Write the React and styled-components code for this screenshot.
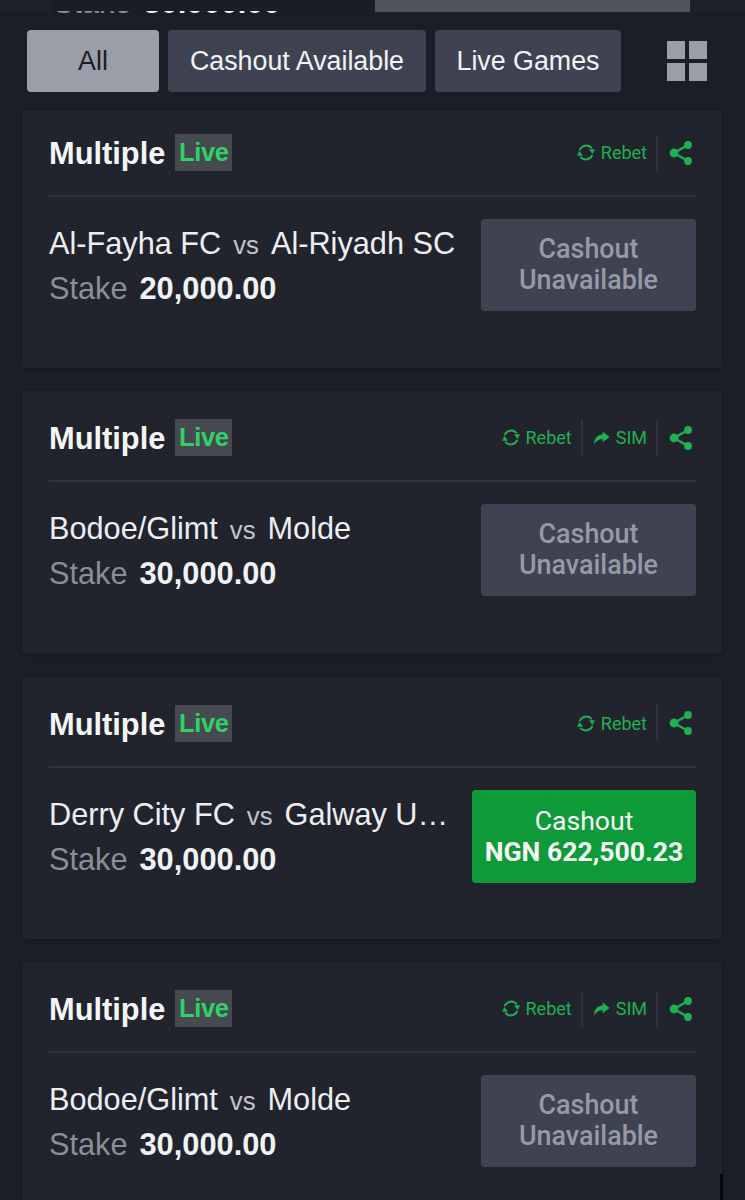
import React from 'react';
import styled, { createGlobalStyle } from 'styled-components';

const GREEN = '#1fb14f';
const SANS = '"Liberation Sans", Arial, sans-serif';

const bets = [
    { id: 1, home: 'Al-Fayha FC', away: 'Al-Riyadh SC', stake: '20,000.00', sim: false, first: true },
    { id: 2, home: 'Bodoe/Glimt', away: 'Molde', stake: '30,000.00', sim: true },
    { id: 3, home: 'Derry City FC', away: 'Galway United FC', stake: '30,000.00', sim: false, cashout: 'NGN 622,500.23' },
    { id: 4, home: 'Bodoe/Glimt', away: 'Molde', stake: '30,000.00', sim: true },
];

const RebetIcon = () => (
    <svg width="18" height="19" viewBox="0 0 18 19" fill="none" stroke={GREEN} strokeWidth="2" strokeLinecap="round">
        <path d="M3 6.4A7 7 0 0 1 14.2 4.6" />
        <path d="M15 12.6A7 7 0 0 1 3.8 14.4" />
        <path d="M17.4 6.6 H12.6 L15.4 10.4Z" fill={GREEN} strokeWidth="0.6" strokeLinejoin="round" />
        <path d="M0.6 12.4 H5.4 L2.6 8.6Z" fill={GREEN} strokeWidth="0.6" strokeLinejoin="round" />
    </svg>
);

const SimIcon = () => (
    <svg width="17" height="16" viewBox="0 0 17 16" fill={GREEN}>
        <path d="M9.6 1.5 16.6 7 9.6 12.2V9.2C5.8 9.2 3.2 10.6 1 14.5 0.9 8.8 4.2 4.8 9.6 4.5Z" />
    </svg>
);

const ShareIcon = () => (
    <svg width="24" height="26" viewBox="0 0 24 26" fill={GREEN} stroke={GREEN}>
        <path d="M19 5 5 13 19 21" fill="none" strokeWidth="2.4" />
        <circle cx="19" cy="5" r="3.9" stroke="none" />
        <circle cx="5" cy="13" r="4.4" stroke="none" />
        <circle cx="19" cy="21" r="3.9" stroke="none" />
    </svg>
);

const GridIcon = () => (
    <GridGlyph>
        <span /><span /><span /><span />
    </GridGlyph>
);

const BetCard = ({ bet }) => (
    <Card $first={bet.first}>
        <CardHeader>
            <TitleRow>
                <Title>Multiple</Title>
                <LiveBadge>Live</LiveBadge>
            </TitleRow>
            <Actions>
                <Action>
                    <RebetIcon />
                    Rebet
                </Action>
                {bet.sim && (
                    <SimAction>
                        <SimIcon />
                        SIM
                    </SimAction>
                )}
                <ShareAction>
                    <ShareIcon />
                </ShareAction>
            </Actions>
        </CardHeader>
        <CardBody>
            <BetInfo>
                <Teams>
                    {bet.home}
                    <Versus>vs</Versus>
                    {bet.away}
                </Teams>
                <StakeRow>
                    <StakeLabel>Stake</StakeLabel>
                    <StakeValue>{bet.stake}</StakeValue>
                </StakeRow>
            </BetInfo>
            {bet.cashout ? (
                <CashoutButton>
                    Cashout
                    <strong>{bet.cashout}</strong>
                </CashoutButton>
            ) : (
                <UnavailableButton>Cashout Unavailable</UnavailableButton>
            )}
        </CardBody>
    </Card>
);

const App = () => (
    <>
        <GlobalStyle />
        <Page>
            <PeekRow>
                <PeekStake>
                    <PeekSliver>
                        <StakeRow>
                            <StakeLabel>Stake</StakeLabel>
                            <StakeValue>30,000.00</StakeValue>
                        </StakeRow>
                    </PeekSliver>
                </PeekStake>
                <PeekButton />
            </PeekRow>
            <Toolbar>
                <FilterButton $active $width={132}>All</FilterButton>
                <FilterButton $width={258}>Cashout Available</FilterButton>
                <FilterButton $width={186}>Live Games</FilterButton>
                <GridIcon />
            </Toolbar>
            <CardList>
                {bets.map(bet => <BetCard key={bet.id} bet={bet} />)}
            </CardList>
            <ScrollThumb />
        </Page>
    </>
);

export default App;

const GlobalStyle = createGlobalStyle`
    html, body {
        margin: 0;
        background: #1b1e26;
    }

    * {
        box-sizing: border-box;
    }
`;

const Page = styled.div`
    position: relative;
    width: 745px;
    height: 1200px;
    overflow: hidden;
    background: #1b1e26;
    font-family: Roboto, "Liberation Sans", sans-serif;
`;

const ScrollThumb = styled.div`
    position: absolute;
    left: 720px;
    top: 1174px;
    bottom: 0;
    width: 3px;
    background: #07080a;
`;

const PeekRow = styled.div`
    height: 13px;
    display: flex;
    justify-content: space-between;
    padding: 0 55px 0 53px;
    background: #1f2129;
    overflow: hidden;
`;

const PeekStake = styled.div`
    width: 322px;
    padding-top: 11px;
    background: #1a1d25;
`;

const PeekSliver = styled.div`
    height: 2px;
    overflow: hidden;

    & > div {
        margin-top: -23px;
        line-height: 30px;
    }
`;

const PeekButton = styled.div`
    width: 315px;
    height: 12px;
    background: #50535e;
`;

const Toolbar = styled.div`
    height: 97px;
    display: flex;
    align-items: flex-start;
    gap: 9px;
    padding: 17px 0 0 27px;
    background: #1b1e26;
`;

const FilterButton = styled.div`
    width: ${props => props.$width}px;
    height: 62px;
    display: flex;
    align-items: center;
    justify-content: center;
    border-radius: 4px;
    background: ${props => (props.$active ? '#9a9ea9' : '#3f4351')};
    color: ${props => (props.$active ? '#1b1e26' : '#f2f3f5')};
    font-family: ${SANS};
    font-size: 26.8px;
`;

const GridGlyph = styled.div`
    width: 40px;
    height: 41px;
    margin: 11px 0 0 37px;
    display: grid;
    grid-template-columns: 18px 18px;
    grid-template-rows: 18px 18px;
    gap: 4px;

    span {
        background: #9a9ea9;
    }
`;

const CardList = styled.div`
    display: flex;
    flex-direction: column;
    gap: 23px;
    padding: 0 23px 0 22px;
`;

const Card = styled.div`
    height: ${props => (props.$first ? 258 : 262.5)}px;
    flex-shrink: 0;
    padding: ${props => (props.$first ? 0 : 4)}px 26px 0 27px;
    background: #21242d;
    border-radius: 4px;
    box-shadow: 0 1px 3px rgba(0, 0, 0, 0.25);
`;

const CardHeader = styled.div`
    height: 87px;
    display: flex;
    align-items: center;
    justify-content: space-between;
    border-bottom: 2px solid #30333d;
`;

const TitleRow = styled.div`
    display: flex;
    align-items: center;
    gap: 10px;
`;

const Title = styled.div`
    padding-top: 2px;
    font-family: ${SANS};
    font-size: 30.8px;
    line-height: 35px;
    font-weight: 700;
    color: #f4f5f7;
`;

const LiveBadge = styled.div`
    width: 57px;
    height: 37px;
    display: flex;
    align-items: center;
    justify-content: center;
    background: #46494f;
    color: #2fd267;
    font-family: ${SANS};
    font-size: 25.5px;
    letter-spacing: -0.3px;
    font-weight: 700;
`;

const Actions = styled.div`
    display: flex;
    align-items: center;
    color: ${GREEN};
    font-size: 18px;
`;

const Action = styled.div`
    height: 36px;
    display: flex;
    align-items: center;
    gap: 6px;
    padding-right: 9px;
    border-right: 2px solid #30333d;
`;

const SimAction = styled(Action)`
    padding-left: 10px;
`;

const ShareAction = styled.div`
    display: flex;
    align-items: center;
    padding: 0 3px 0 11px;
`;

const CardBody = styled.div`
    display: flex;
    align-items: flex-start;
    justify-content: space-between;
    gap: 20px;
    padding-top: 22px;
`;

const BetInfo = styled.div`
    flex: 1;
    min-width: 0;
    display: flex;
    flex-direction: column;
    gap: 6px;
    padding-top: 5px;
`;

const Teams = styled.div`
    font-family: ${SANS};
    font-size: 30.7px;
    line-height: 39px;
    color: #eceef1;
    white-space: nowrap;
    overflow: hidden;
    text-overflow: ellipsis;
`;

const Versus = styled.span`
    margin: 0 12px;
    font-size: 25.7px;
    color: #c3c5cc;
`;

const StakeRow = styled.div`
    display: flex;
    align-items: baseline;
    gap: 12px;
    line-height: 36px;
    font-family: ${SANS};
    white-space: nowrap;
`;

const StakeLabel = styled.span`
    font-size: 30.7px;
    color: #8b8e99;
`;

const StakeValue = styled.span`
    font-size: 30.8px;
    font-weight: 700;
    color: #f1f2f4;
`;

const UnavailableButton = styled.div`
    flex-shrink: 0;
    width: 215px;
    height: 92px;
    display: flex;
    align-items: center;
    justify-content: center;
    text-align: center;
    padding: 0 20px;
    border-radius: 4px;
    background: #3f4351;
    color: #969aa6;
    font-size: 26.9px;
    font-weight: 500;
    line-height: 31px;
`;

const CashoutButton = styled.div`
    flex-shrink: 0;
    width: 224px;
    height: 93px;
    display: flex;
    flex-direction: column;
    align-items: center;
    justify-content: center;
    border-radius: 4px;
    background: #0f9a3a;
    color: #f6f8f6;
    font-size: 26.6px;
    line-height: 31px;

    strong {
        font-weight: 700;
    }
`;
